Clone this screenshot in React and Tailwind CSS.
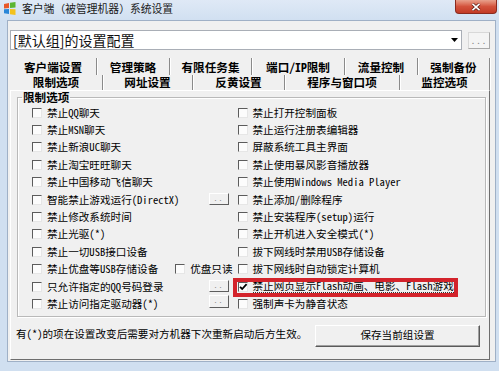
import React from "react";

const CN = "font-['Noto_Sans_Mono_CJK_SC','Noto_Sans_CJK_SC',sans-serif]";

function AppIcon() {
  return (
    <svg width="13" height="13" viewBox="0 0 13 13" className="ml-[3px] mt-[2px] shrink-0">
      <path d="M1 2 L6 1 L6 6 L1 6.5 Z" fill="#e8582a" />
      <path d="M7 0.8 L12.5 0 L12.5 5.6 L7 6 Z" fill="#5cb531" />
      <path d="M1 7.3 L6 7 L6 12 L1 11.2 Z" fill="#2a86d8" />
      <path d="M7 7 L12.5 7.2 L12.5 13 L7 12.2 Z" fill="#f3c21d" />
    </svg>
  );
}

function Box({ checked }) {
  return (
    <span className="relative w-[10px] h-[10px] shrink-0 bg-[#fcfcfc] border-t-[1.5px] border-l-[1.5px] border-t-[#5c5c5c] border-l-[#5c5c5c] border-b border-r border-b-[#e6e6e6] border-r-[#e6e6e6]">
      {checked && (
        <svg width="9" height="8" viewBox="0 0 9 8" className="absolute left-[0px] top-[0px]">
          <path d="M1 3.8 L3.2 6 L7.6 1.2" stroke="#000" strokeWidth="1.8" fill="none" />
        </svg>
      )}
    </span>
  );
}

function DotBtn({ cls }) {
  return (
    <span
      className={
        "flex items-start justify-center w-[20px] h-[12px] bg-[#f0f0f0] border border-t-[#ffffff] border-l-[#ffffff] border-r-[#5e5e5e] border-b-[#5e5e5e] text-[8px] leading-[7px] text-[#8a8a8a] tracking-[1px] " +
        cls
      }
    >
      ..
    </span>
  );
}

function Row({ label, checked, focus, children }) {
  return (
    <div className="relative h-[17.4px] flex items-center gap-[5px]">
      <Box checked={checked} />
      <span
        className={
          "text-[10.6px] leading-[12px] whitespace-nowrap " +
          (focus ? "border-b border-dotted border-[#333]" : "")
        }
      >
        {label}
      </span>
      {children}
    </div>
  );
}

const tabs1 = [
  ["客户端设置", "w-[87px]"],
  ["管理策略", "w-[73px]"],
  ["有限任务集", "w-[82px]"],
  ["端口/IP限制", "w-[93px]"],
  ["流量控制", "w-[73px]"],
  ["强制备份", "w-[72px]"],
];
const tabs2 = [
  ["限制选项", "w-[93px]"],
  ["网址设置", "w-[90px]"],
  ["反黄设置", "w-[92px]"],
  ["程序与窗口项", "w-[115px]"],
  ["监控选项", "w-[90px]"],
];

const leftRows = [
  "禁止QQ聊天",
  "禁止MSN聊天",
  "禁止新浪UC聊天",
  "禁止淘宝旺旺聊天",
  "禁止中国移动飞信聊天",
  "智能禁止游戏运行(DirectX)",
  "禁止修改系统时间",
  "禁止光驱(*)",
  "禁止一切USB接口设备",
  "禁止优盘等USB存储设备",
  "只允许指定的QQ号码登录",
  "禁止访问指定驱动器(*)",
];

const rightRows = [
  "禁止打开控制面板",
  "禁止运行注册表编辑器",
  "屏蔽系统工具主界面",
  "禁止使用暴风影音播放器",
  "禁止使用Windows Media Player",
  "禁止添加/删除程序",
  "禁止安装程序(setup)运行",
  "禁止开机进入安全模式(*)",
  "拔下网线时禁用USB存储设备",
  "拔下网线时自动锁定计算机",
  "禁止网页显示Flash动画、电影、Flash游戏",
  "强制声卡为静音状态",
];

export default function App() {
  return (
    <div className={"w-[499px] h-[371px] bg-[#d0dff0] overflow-hidden flex flex-col text-black " + CN}>
      {/* Title bar */}
      <div className="h-[20px] shrink-0 flex items-start bg-gradient-to-b from-[#dfe9f6] to-[#d1e0f1]">
        <AppIcon />
        <span className="ml-[6px] mt-[2px] text-[10.8px] leading-[13px] text-[#1a1a1a] font-['Noto_Sans_CJK_SC',sans-serif] whitespace-nowrap">
          客户端（被管理机器）系统设置
        </span>
        <div className="ml-auto mr-[2px] w-[42px] h-[14px] rounded-b-[4px] border border-t-0 border-[#8a2a1e] bg-gradient-to-b from-[#e8a08c] via-[#d3523c] to-[#c23a25] flex items-center justify-center">
          <svg width="10" height="8" viewBox="0 0 10 8">
            <path d="M1.5 0.8 L8.5 7.2 M8.5 0.8 L1.5 7.2" stroke="#5a1a12" strokeWidth="3" />
            <path d="M1.5 0.8 L8.5 7.2 M8.5 0.8 L1.5 7.2" stroke="#ffffff" strokeWidth="1.6" />
          </svg>
        </div>
      </div>

      {/* Client area */}
      <div className="ml-[7px] mr-[3px] h-[342px] shrink-0 bg-[#f0f0f0] border border-[#9fb0c6] flex flex-col">
        {/* Combo row */}
        <div className="mt-[9px] ml-[2px] flex items-start">
          <div className="w-[452px] h-[20px] bg-white border border-[#a9aeb6] flex items-center">
            <span className="pl-[2px] text-[14px] leading-[18px] font-['Noto_Sans_CJK_SC',sans-serif] text-[#111] whitespace-nowrap">
              [默认组]的设置配置
            </span>
            <div className="ml-auto mr-[1px] w-[11px] h-[16px] flex items-center justify-center">
              <svg width="7" height="4" viewBox="0 0 7 4">
                <path d="M0 0 L7 0 L3.5 4 Z" fill="#000" />
              </svg>
            </div>
          </div>
          <div className="ml-[6px] mt-[2px] w-[22px] h-[17px] bg-[#f4f4f4] border border-t-[#d8d8d8] border-l-[#d8d8d8] border-r-[#a8a8a8] border-b-[#a8a8a8] flex items-center justify-center text-[9px] leading-none text-[#888] tracking-[1px]">
            ...
          </div>
        </div>

        {/* Tabs */}
        <div className="mt-[8px] ml-[2px] flex flex-col">
          <div className="flex h-[17px]">
            {tabs1.map(([t, w]) => (
              <div
                key={t}
                className={
                  w +
                  " h-[17px] flex items-center justify-center border-r border-r-[#8a8a8a] shadow-[1px_0_0_#ffffff] text-[11.6px] font-bold leading-none whitespace-nowrap pt-[2px]"
                }
              >
                {t}
              </div>
            ))}
          </div>
          <div className="flex h-[15px]">
            {tabs2.map(([t, w], i) => (
              <div
                key={t}
                className={
                  w +
                  " h-[15px] flex items-center justify-center border-r border-r-[#8a8a8a] shadow-[1px_0_0_#ffffff] text-[11.6px] font-bold leading-none whitespace-nowrap " +
                  (i === 0 ? "pt-[0px]" : "pt-[1px]")
                }
              >
                {t}
              </div>
            ))}
          </div>
        </div>

        {/* Tab panel */}
        <div className="ml-[2px] w-[480px] h-[270px] shrink-0 border border-l-[#ffffff] border-t-[#ffffff] border-r-[#6d6d6d] border-b-[#6d6d6d] flex flex-col">
          <fieldset className="ml-[6px] mr-[3px] border border-[#b9b9b9] shadow-[inset_1px_1px_0_#ffffff,1px_1px_0_#ffffff] pb-[3px]">
            <legend className="ml-[4px] px-[1px] text-[11.6px] font-bold leading-[12px]">
              限制选项
            </legend>
            <div className="grid grid-cols-[205.5px_1fr] pl-[14px] pt-[1px]">
              <div className="flex flex-col">
                {leftRows.map((t, i) => (
                  <Row key={t} label={t}>
                    {i === 5 && <DotBtn cls="ml-auto mr-[9px] -mt-[2px]" />}
                    {i === 9 && (
                      <span className="ml-auto mr-[5px] flex items-center gap-[5px]">
                        <Box />
                        <span className="text-[10.6px] leading-[12px] whitespace-nowrap">优盘只读</span>
                      </span>
                    )}
                    {i === 10 && <DotBtn cls="ml-auto mr-[9px] -mt-[1px]" />}
                    {i === 11 && <DotBtn cls="ml-auto mr-[9px] -mt-[4px] h-[13px]" />}
                  </Row>
                ))}
              </div>
              <div className="flex flex-col">
                {rightRows.map((t, i) => (
                  <Row key={t} label={t} checked={i === 10} focus={i === 10}>
                    {i === 10 && (
                      <span className="absolute -left-[5px] top-[0px] w-[225px] h-[19px] border-[4px] border-[#d3232b] z-10" />
                    )}
                  </Row>
                ))}
              </div>
            </div>
          </fieldset>

          <div className="flex items-start">
            <span className="ml-[5px] mt-[10px] text-[10.6px] leading-[13px] whitespace-nowrap">
              有(*)的项在设置改变后需要对方机器下次重新启动后方生效。
            </span>
            <div className="ml-auto mr-[9px] mt-[8px] w-[165px] h-[22px] bg-[#f0f0f0] border border-t-[#ffffff] border-l-[#ffffff] border-r-[#5a5a5a] border-b-[#5a5a5a] shadow-[inset_-1px_-1px_0_#a0a0a0] flex items-center justify-center text-[10.6px] leading-none">
              保存当前组设置
            </div>
          </div>
        </div>
      </div>
    </div>
  );
}
